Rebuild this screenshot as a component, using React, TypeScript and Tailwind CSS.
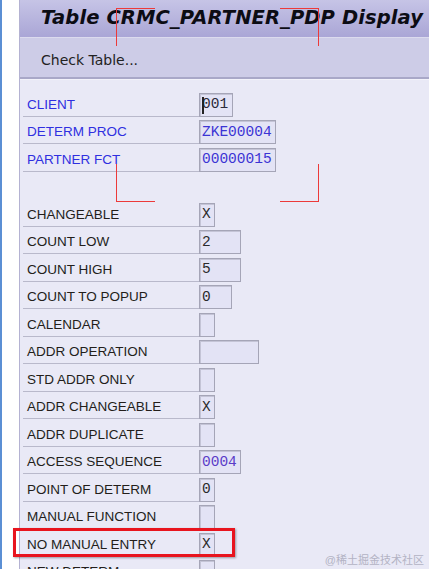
import React from "react";

type Row = {
  label: string;
  value?: string;
  w: number;
  key?: boolean;
  valColor?: string;
  cursor?: boolean;
};

const rows: (Row | null)[] = [
  { label: "CLIENT", value: "001", w: 34, key: true, valColor: "#2a2a3a", cursor: true },
  { label: "DETERM PROC", value: "ZKE00004", w: 77, key: true, valColor: "#3b34d4" },
  { label: "PARTNER FCT", value: "00000015", w: 77, key: true, valColor: "#3b34d4" },
  null,
  { label: "CHANGEABLE", value: "X", w: 16 },
  { label: "COUNT LOW", value: "2", w: 42 },
  { label: "COUNT HIGH", value: "5", w: 42 },
  { label: "COUNT TO POPUP", value: "0", w: 33 },
  { label: "CALENDAR", w: 16 },
  { label: "ADDR OPERATION", w: 60 },
  { label: "STD ADDR ONLY", w: 16 },
  { label: "ADDR CHANGEABLE", value: "X", w: 16 },
  { label: "ADDR DUPLICATE", w: 16 },
  { label: "ACCESS SEQUENCE", value: "0004", w: 42, valColor: "#5a3cc8" },
  { label: "POINT OF DETERM", value: "0", w: 16 },
  { label: "MANUAL FUNCTION", w: 16 },
  { label: "NO MANUAL ENTRY", value: "X", w: 16 },
  { label: "NEW DETERM", w: 16 },
];

function FieldRow({ r }: { r: Row }) {
  return (
    <div className="flex items-end h-[27.5px] shrink-0">
      <div
        className="w-[176px] h-[24px] flex items-center pl-[4px] pt-[1px] border-b border-[#b9b9cb] text-[13.5px] leading-none"
        style={{ color: r.key ? "#2f2fe0" : "#231e1a" }}
      >
        {r.label}
      </div>
      <div
        className="relative h-[24px] flex items-center pl-[2px] border border-[#a5a5b7] bg-[#e3e3f5] shadow-[inset_1px_1px_0_#c4c4d6] text-[14.5px] leading-none"
        style={{ width: r.w, color: r.valColor ?? "#2a2a2a", fontFamily: '"Liberation Mono", monospace' }}
      >
        {r.value ?? ""}
        {r.cursor && (
          <span className="absolute left-[2px] top-[3px] w-[2px] h-[17px] bg-[#222]" />
        )}
      </div>
    </div>
  );
}

export default function App() {
  return (
    <div
      className="relative w-[429px] h-[569px] overflow-hidden bg-white flex"
      style={{ fontFamily: '"Liberation Sans", "Noto Sans CJK SC", sans-serif' }}
    >
      <div className="w-[19px] h-full bg-white border-l-[2px] border-[#5b8fd4] shrink-0" />
      <div className="flex-1 h-full border-l border-[#b4b2d2] bg-[#e9e9f6] flex flex-col">
        <div className="h-[38px] shrink-0 bg-gradient-to-b from-[#c6c4e6] to-[#aaa6d6] flex items-center pl-[21px] pb-[2px] border-b border-[#dcdbee]">
          <span
            className="text-[19.5px] font-bold italic text-[#0c0c14] whitespace-nowrap tracking-[0.1px]"
            style={{ fontFamily: '"DejaVu Sans", sans-serif' }}
          >
            Table CRMC_PARTNER_PDP Display
          </span>
        </div>
        <div className="h-[41px] shrink-0 bg-[#cdcce7] border-b-[2px] border-[#a9a8c8] flex items-center pl-[21px] pt-[5px]">
          <span className="text-[#222]" style={{ fontFamily: '"DejaVu Sans", sans-serif', fontSize: 14 }}>
            Check Table...
          </span>
        </div>
        <div className="flex flex-col pl-[3px] pt-[9px] border-t border-[#f2f2fa]">
          {rows.map((r, i) =>
            r ? <FieldRow key={i} r={r} /> : <div key={i} className="h-[27.5px] shrink-0" />
          )}
        </div>
      </div>

      {/* red annotation corners */}
      <div className="absolute left-[116px] top-[8px] w-[39px] h-[38px] border-l-[1.5px] border-t-[1.5px] border-[#ec3a3a]" />
      <div className="absolute left-[280px] top-[8px] w-[39px] h-[38px] border-r-[1.5px] border-t-[1.5px] border-[#ec3a3a]" />
      <div className="absolute left-[116px] top-[164px] w-[39px] h-[38px] border-l-[1.5px] border-b-[1.5px] border-[#ec3a3a]" />
      <div className="absolute left-[280px] top-[164px] w-[39px] h-[38px] border-r-[1.5px] border-b-[1.5px] border-[#ec3a3a]" />

      {/* highlight box */}
      <div className="absolute left-[13px] top-[528px] w-[222px] h-[29px] border-[3px] border-[#e8141e] shadow-[1px_1px_2px_rgba(0,0,0,0.35)]" />

      <div className="absolute right-[5px] bottom-[1px] text-[11px] text-[#b3b3c4] whitespace-nowrap">
        @稀土掘金技术社区
      </div>
    </div>
  );
}
